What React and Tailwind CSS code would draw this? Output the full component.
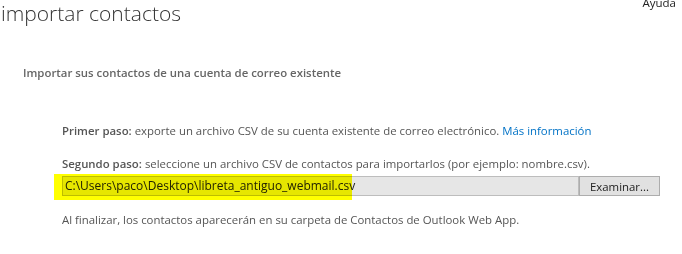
export default function App() {
  return (
    <div className="relative w-[682px] h-[254px] overflow-hidden bg-white font-['Open_Sans',sans-serif] text-[11.4px] text-[#555]">
      {/* Header */}
      <div className="flex items-start justify-between">
        <h1 className="ml-[1px] text-[21px] font-light leading-[26px] text-[#333]">
          importar contactos
        </h1>
        <a className="mr-[6px] -mt-[6px] text-[11.5px] text-[#222]">Ayuda</a>
      </div>

      {/* Section title */}
      <h2 className="ml-[23px] mt-[38px] font-semibold text-[#666]">
        Importar sus contactos de una cuenta de correo existente
      </h2>

      <div className="ml-[62px] mt-[41px] flex flex-col">
        <p>
          <span className="font-semibold">Primer paso:</span> exporte un archivo CSV de su cuenta existente de correo electrónico.{" "}
          <a className="text-[#0072c6]">Más información</a>
        </p>

        <p className="mt-[16px]">
          <span className="font-semibold">Segundo paso:</span> seleccione un archivo CSV de contactos para importarlos (por ejemplo: nombre.csv).
        </p>

        {/* File picker */}
        <div className="relative mt-[4px] flex h-[20px] items-stretch">
          <div className="flex w-[517px] items-center border border-[#bdbdbd] bg-[#e6e6e6] px-[2px] text-[12px] text-[#222]">
            C:\Users\paco\Desktop\libreta_antiguo_webmail.csv
          </div>
          <button className="w-[81px] border border-[#adadad] bg-[#e1e1e1] text-[#222]">
            Examinar...
          </button>
          {/* Highlighter mark */}
          <div className="pointer-events-none absolute -left-[8px] -top-[2px] h-[26px] w-[298px] bg-[#ffff00] mix-blend-multiply" />
        </div>

        <p className="mt-[15px]">
          Al finalizar, los contactos aparecerán en su carpeta de Contactos de Outlook Web App.
        </p>
      </div>
    </div>
  );
}
